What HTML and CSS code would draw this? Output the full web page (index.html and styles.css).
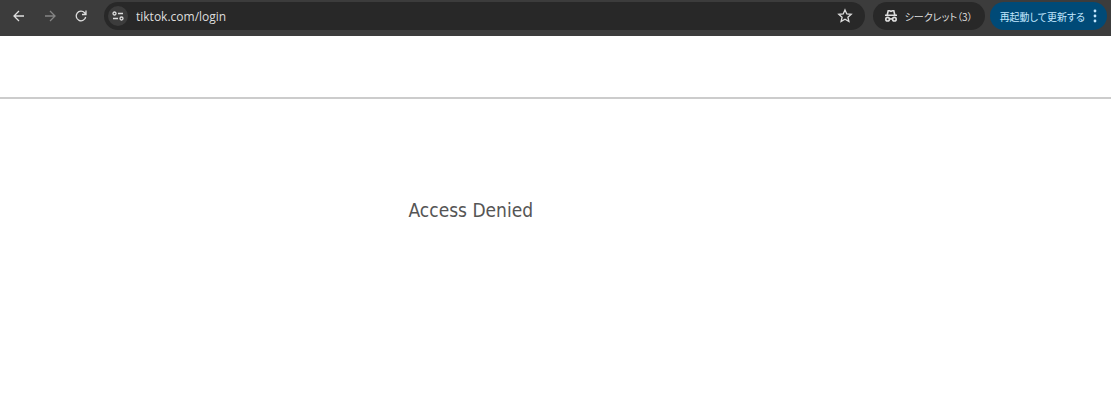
FILE: index.html
```
<!DOCTYPE html>
<html lang="ja">
<head>
    <meta charset="UTF-8">
    <meta name="viewport" content="width=device-width, initial-scale=1.0">
    <title>Access Denied</title>
    <link rel="stylesheet" href="styles.css">
</head>
<body>
    <nav class="toolbar">
      <button class="nav-button" type="button" aria-label="戻る">
        <svg class="icon" viewBox="0 0 16 16"><path d="M13 8H3M8 3L3 8l5 5"/></svg>
      </button>
      <button class="nav-button" type="button" aria-label="進む" disabled>
        <svg class="icon" viewBox="0 0 16 16"><path d="M3 8h10M8 3l5 5-5 5"/></svg>
      </button>
      <button class="nav-button" type="button" aria-label="再読み込み">
        <svg class="icon" viewBox="0 0 16 16"><path d="M12.7 9A4.8 4.8 0 1 1 11.6 4.8L13 6.3M13 2.5v4H9"/></svg>
      </button>

      <div class="address">
        <button class="site-info" type="button" aria-label="サイト情報">
          <svg class="icon" viewBox="0 0 16 16"><circle cx="4.5" cy="5.5" r="1.5"/><path d="M8 5.5h5M3 10.5h5"/><circle cx="11.5" cy="10.5" r="1.5"/></svg>
        </button>
        <input class="url" type="text" value="tiktok.com/login" aria-label="アドレス" spellcheck="false">
        <button class="star" type="button" aria-label="ブックマーク">
          <svg class="icon" viewBox="0 0 16 16"><path d="M8 1.9l1.8 4 4.4.4-3.3 2.9 1 4.3L8 11.2l-3.9 2.3 1-4.3-3.3-2.9 4.4-.4z"/></svg>
        </button>
      </div>

      <button class="chip" type="button">
        <svg class="icon mask" viewBox="0 0 16 16"><path d="M2 7.3h12M4.2 7l1-4.2h1.3L8 3.3l1.5-.5h1.3l1 4.2M6.4 11.2q1.6-.8 3.2 0"/><circle cx="4.6" cy="11.2" r="1.8"/><circle cx="11.4" cy="11.2" r="1.8"/></svg>
        <span>シークレット（3）</span>
      </button>
      <button class="chip update" type="button">
        <span>再起動して更新する</span>
        <svg class="dots" viewBox="0 0 4 14"><circle cx="2" cy="2" r="1.4"/><circle cx="2" cy="7" r="1.4"/><circle cx="2" cy="12" r="1.4"/></svg>
      </button>
    </nav>

    <header class="site-header"></header>
    <main class="content">
      <h1>Access Denied</h1>
    </main>
</body>
</html>
```
FILE: styles.css
```
* {
    box-sizing: border-box;
}

body {
    margin: 0;
    background-color: #fff;
    font-family: "Open Sans", "Noto Sans CJK JP", sans-serif;
}

button {
    display: flex;
    align-items: center;
    justify-content: center;
    flex-shrink: 0;
    padding: 0;
    border: 0;
    background: none;
    color: #dedede;
    font-family: inherit;
}

.toolbar {
    display: flex;
    align-items: center;
    height: 36px;
    padding: 0 4px 4px 3px;
    background-color: #3c3c3c;
}

.nav-button {
    width: 31px;
    height: 28px;
}

.nav-button:disabled {
    color: #858585;
}

.icon {
    width: 16px;
    height: 16px;
    fill: none;
    stroke: currentColor;
    stroke-width: 1.3;
}

.mask {
    stroke-width: 1.6;
}

.address {
    display: flex;
    align-items: center;
    flex: 1;
    height: 28px;
    margin: 0 8px;
    padding: 0 12px 0 4px;
    border-radius: 14px;
    background-color: #282828;
}

.site-info {
    width: 20px;
    height: 20px;
    border-radius: 50%;
    background-color: #3c3c3c;
}

.url {
    flex: 1;
    min-width: 0;
    padding: 0 8px;
    border: 0;
    outline: 0;
    background: none;
    color: #dedede;
    font-family: inherit;
    font-size: 12px;
}

.chip {
    justify-content: flex-start;
    gap: 6px;
    min-width: 112px;
    height: 28px;
    padding: 0 10px;
    border-radius: 14px;
    background-color: #282828;
    font-family: "Noto Sans CJK JP", sans-serif;
    font-size: 10px;
    font-feature-settings: "palt";
}

.update {
    gap: 8px;
    min-width: 117px;
    margin-left: 5px;
    background-color: #004a77;
    color: #c2e7ff;
}

.dots {
    width: 4px;
    height: 14px;
    fill: currentColor;
}

.site-header {
    height: 63px;
    border-bottom: 2px solid #ccc;
}

.content {
    max-width: 294px;
    margin: 0 auto;
    padding-top: 98px;
}

h1 {
    margin: 0;
    color: #555;
    font-family: "DejaVu Sans Condensed", Tahoma, sans-serif;
    font-size: 19px;
    font-weight: 400;
    line-height: 26px;
}
```
